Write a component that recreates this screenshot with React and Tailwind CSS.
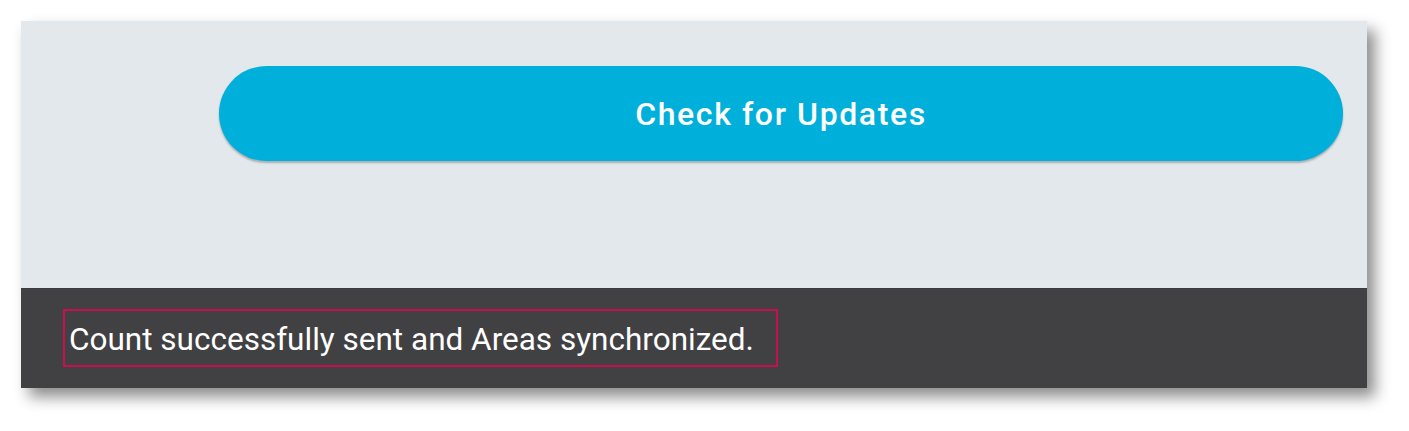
export default function App() {
  return (
    <div className="w-[1409px] h-[431px] bg-white pt-[21px] pl-[21px]" style={{ fontFamily: "Roboto, 'Liberation Sans', sans-serif" }}>
      <div className="w-[1346px] flex flex-col shadow-[8px_9px_14px_rgba(0,0,0,0.45)]">
        <div className="h-[267px] bg-[#e3e8ec] pt-[45px] pl-[198px] pr-[24px]">
          <button className="w-full h-[95px] rounded-full bg-[#00b0db] text-white text-[32px] font-medium tracking-[1.6px] shadow-[0_2px_2px_rgba(0,0,0,0.25)]">
            Check for Updates
          </button>
        </div>
        <div className="h-[100px] bg-[#414042] border-t border-[#3a393b] pt-[20px] pl-[42px]">
          <div className="inline-flex items-center h-[58px] border-2 border-[#c8104f] pl-[4px] pr-[22px] pt-[3px] text-white text-[31.5px]">
            Count successfully sent and Areas synchronized.
          </div>
        </div>
      </div>
    </div>
  );
}
